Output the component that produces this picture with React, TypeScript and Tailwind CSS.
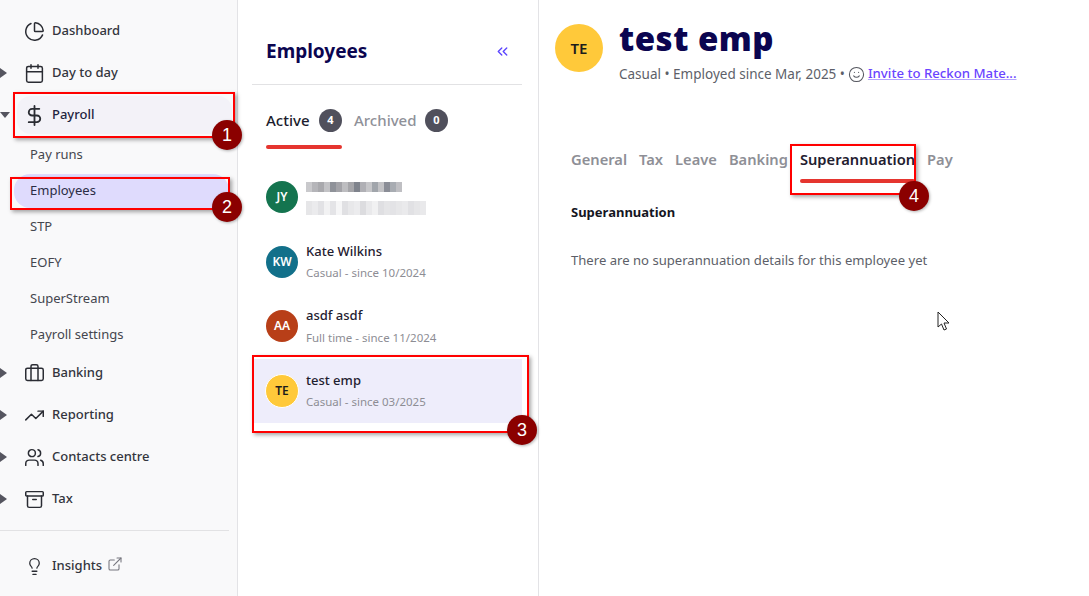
import React from "react";
import { Archive, Briefcase, Calendar, ChevronsLeft, DollarSign, ExternalLink, Lightbulb, PieChart, Smile, TrendingUp, Users } from "lucide-react";

const font = { fontFamily: '"Noto Sans", "Open Sans", sans-serif' };

function Caret({ open }: { open?: boolean }) {
  return open ? (
    <div className="absolute left-0 top-1/2 -mt-[3px] w-0 h-0 border-l-[5px] border-r-[5px] border-t-[6px] border-l-transparent border-r-transparent border-t-[#55555f]" />
  ) : (
    <div className="absolute left-0 top-1/2 -mt-[5px] w-0 h-0 border-t-[5px] border-b-[5px] border-l-[7px] border-t-transparent border-b-transparent border-l-[#55555f]" />
  );
}

function NavRow({ icon, label, caret, open, active }: { icon: React.ReactNode; label: string; caret?: boolean; open?: boolean; active?: boolean }) {
  return (
    <div className="relative h-[42px] flex items-center">
      {caret && <Caret open={open} />}
      <div className={`ml-[17px] mr-[5px] flex-1 h-[38px] flex items-center rounded-[14px] ${active ? "bg-[#f3f2f8]" : ""}`}>
        <div className="w-[35px] flex justify-center text-[#2a2c33]">{icon}</div>
        <span className={`text-[13px] font-medium ${active ? "text-[#1f2440]" : "text-[#33353d]"}`}>{label}</span>
      </div>
    </div>
  );
}

function SubRow({ label, active }: { label: string; active?: boolean }) {
  return (
    <div className="h-[36px] flex items-center">
      <div className={`ml-[14px] mr-[8px] flex-1 h-[34px] flex items-center pl-[16px] rounded-[16px] text-[13px] ${active ? "bg-[#dfdbfd] text-[#2b2c45]" : "text-[#44464e]"}`}>{label}</div>
    </div>
  );
}

function Sidebar() {
  const ic = { size: 21, strokeWidth: 1.7 };
  return (
    <aside className="w-[238px] shrink-0 bg-[#f9f9fa] border-r border-[#e3e3e6] pt-[10px] flex flex-col">
      <NavRow icon={<PieChart {...ic} />} label="Dashboard" />
      <NavRow icon={<Calendar {...ic} />} label="Day to day" caret />
      <NavRow icon={<DollarSign size={23} strokeWidth={1.9} />} label="Payroll" caret open active />
      <div className="mt-[1px] -mb-[1px]">
        <SubRow label="Pay runs" />
        <SubRow label="Employees" active />
        <SubRow label="STP" />
        <SubRow label="EOFY" />
        <SubRow label="SuperStream" />
        <SubRow label="Payroll settings" />
      </div>
      <NavRow icon={<Briefcase {...ic} />} label="Banking" caret />
      <NavRow icon={<TrendingUp {...ic} />} label="Reporting" caret />
      <NavRow icon={<Users {...ic} />} label="Contacts centre" caret />
      <NavRow icon={<Archive {...ic} />} label="Tax" caret />
      <div className="mt-[10px] h-px mr-[8px] bg-[#e2e2e4]" />
      <div className="mt-[14px] h-[42px] flex items-center pl-[17px]">
        <div className="w-[35px] flex justify-center text-[#2a2c33]"><Lightbulb size={19} strokeWidth={1.6} /></div>
        <span className="text-[13px] font-medium text-[#33353d]">Insights</span>
        <ExternalLink size={16} strokeWidth={1.6} className="ml-[5px] -mt-[4px] text-[#77777f]" />
      </div>
    </aside>
  );
}

const mosaicTop = ["#c9c9cc","#b5b5b9","#a9a9ad","#c3c3c6","#8f9299","#a3a3a8","#bdbdc0","#a5a5a9","#7f838c","#b0b0b5","#c6c6c9","#a1a5ab","#c2c2c5","#8a8d96","#a8acb2","#bfbfc3"];
const mosaicBottom = ["#e6e6e8","#ebebed","#e2e2e5","#f2f2f3","#e4e4e7","#f6f6f7","#e0e0e3","#e8e8ea","#ececee","#dcdcdf","#e9e9eb","#f1f1f2","#dfdfe2","#e5e5e7","#e3e3e6","#e7e7e9","#eaeaec","#e1e1e4","#e6e6e8","#e9e9eb"];

function Mosaic({ colors, cell }: { colors: string[]; cell: number }) {
  return (
    <div className="flex">
      {colors.map((c, i) => (
        <div key={i} style={{ background: c, width: 6, height: cell }} />
      ))}
    </div>
  );
}

function EmpRow({ initials, bg, fg, name, sub, selected, blurred }: { initials: string; bg: string; fg: string; name?: string; sub?: string; selected?: boolean; blurred?: boolean }) {
  return (
    <div className={`h-[64.5px] ml-[14px] mr-[16px] pl-[14px] flex items-center gap-[8px] ${selected ? "bg-[#eeedfb]" : ""}`}>
      <div className={`rounded-full flex items-center justify-center text-[12px] font-semibold ${bg} ${fg} ${selected ? "w-[34px] h-[34px] -ml-[1px] -mr-[1px] border border-white" : "w-[32px] h-[32px]"}`}>{initials}</div>
      <div className="flex flex-col mt-[1px]">
        {blurred ? (
          <>
            <div className="h-[21px] flex items-center"><Mosaic colors={mosaicTop} cell={10} /></div>
            <div className="h-[22px] flex items-center"><Mosaic colors={mosaicBottom} cell={14} /></div>
          </>
        ) : (
          <>
            <div className="h-[21px] flex items-center text-[13px] font-medium text-[#1f2030]">{name}</div>
            <div className="h-[22px] flex items-center text-[11.5px] text-[#8d8d94]">{sub}</div>
          </>
        )}
      </div>
    </div>
  );
}

function ListPane() {
  return (
    <section className="w-[301px] shrink-0 border-r border-[#e3e3e6] flex flex-col">
      <div className="h-[85px] ml-[14px] mr-[16px] border-b border-[#e2e2e4] flex items-center justify-between pl-[14px] pr-[11px] pt-[19px]">
        <span className="text-[19px] font-bold text-[#0b0550]">Employees</span>
        <ChevronsLeft size={17} strokeWidth={1.9} className="text-[#5b45ff]" />
      </div>
      <div className="h-[64px] flex items-start pl-[28px] relative pt-[23px]">
        <div className="flex items-center h-[24px] w-[76px]">
          <span className="text-[15px] font-medium text-[#1c1d2e] w-[53px]">Active</span>
          <span className="w-[23px] h-[23px] rounded-full bg-[#50505c] text-white text-[11px] font-bold flex items-center justify-center">4</span>
        </div>
        <div className="flex items-center h-[24px] ml-[12px]">
          <span className="text-[15px] font-medium text-[#8f9199] w-[71px]">Archived</span>
          <span className="w-[23px] h-[23px] rounded-full bg-[#50505c] text-white text-[11px] font-bold flex items-center justify-center">0</span>
        </div>
      </div>
      <div className="ml-[28px] -mt-[4px] w-[76px] h-[4px] rounded-full bg-[#e5352f]" />
      <div className="mt-[16px]">
        <EmpRow initials="JY" bg="bg-[#14744f]" fg="text-white" blurred />
        <EmpRow initials="KW" bg="bg-[#12708a]" fg="text-white" name="Kate Wilkins" sub="Casual - since 10/2024" />
        <EmpRow initials="AA" bg="bg-[#b83f18]" fg="text-white" name="asdf asdf" sub="Full time - since 11/2024" />
        <EmpRow initials="TE" bg="bg-[#ffc93a]" fg="text-[#1c1c1c]" name="test emp" sub="Casual - since 03/2025" selected />
      </div>
    </section>
  );
}

function DetailPane() {
  const tabs = ["General", "Tax", "Leave", "Banking"];
  return (
    <section className="flex-1 flex flex-col pl-[16px]">
      <div className="flex pt-[14px] h-[129px]">
        <div className="mt-[10px] w-[48px] h-[48px] rounded-full bg-[#ffc93a] flex items-center justify-center text-[15px] font-semibold text-[#1c1c1c]">TE</div>
        <div className="ml-[16px]">
          <div className="text-[33px] leading-[50px] font-black text-[#0b0550] tracking-[0.5px]">test emp</div>
          <div className="flex items-center h-[18px] text-[13.5px] text-[#5d5f69] mt-[1px]">
            <span>Casual • Employed since Mar, 2025 •</span>
            <Smile size={17} strokeWidth={1.5} className="mx-[3px] text-[#55575f]" />
            <span className="text-[#6a45ff] text-[13.2px] font-medium underline decoration-[#b3a4ff]">Invite to Reckon Mate...</span>
          </div>
        </div>
      </div>
      <div className="pl-[16px] flex items-start h-[57px] text-[14.7px] font-semibold text-[#8e8f96] gap-[12px]">
        {tabs.map((t) => <span key={t} className="leading-[20px] pt-[20px]">{t}</span>)}
        <div className="pt-[20px] flex flex-col">
          <span className="leading-[20px] text-[#1f2030]">Superannuation</span>
          <div className="h-[4px] rounded-full bg-[#e5352f] mt-[10px]" />
        </div>
        <span className="leading-[20px] pt-[20px]">Pay</span>
      </div>
      <div className="pl-[16px] mt-[17px] text-[13px] font-bold text-[#15161f] leading-[18px]">Superannuation</div>
      <div className="pl-[16px] mt-[30px] text-[13.1px] text-[#5d5f69] leading-[18px]">There are no superannuation details for this employee yet</div>
    </section>
  );
}

function Note({ n, box, dot }: { n: number; box: string; dot: string }) {
  return (
    <>
      <div className={`absolute border-2 border-[#ff0000] shadow-[2px_2px_4px_rgba(0,0,0,0.35)] ${box}`} />
      <div className={`absolute w-[30px] h-[30px] rounded-full bg-[#8b0000] text-white text-[18px] flex items-center justify-center shadow-[1px_1px_3px_rgba(0,0,0,0.3)] ${dot}`} style={{ fontFamily: '"Liberation Sans", sans-serif' }}>{n}</div>
    </>
  );
}

export default function App() {
  return (
    <div className="relative w-[1089px] h-[596px] overflow-hidden bg-white flex" style={font}>
      <Sidebar />
      <ListPane />
      <DetailPane />
      <Note n={1} box="left-[13px] top-[92px] w-[222px] h-[46px]" dot="left-[212px] top-[120px]" />
      <Note n={2} box="left-[10px] top-[177px] w-[220px] h-[33px]" dot="left-[212px] top-[192px]" />
      <Note n={3} box="left-[252px] top-[355px] w-[277px] h-[78px]" dot="left-[507px] top-[415px]" />
      <Note n={4} box="left-[790px] top-[144px] w-[126px] h-[51px]" dot="left-[899px] top-[181px]" />
      <svg className="absolute left-[937px] top-[311px]" width="14" height="21" viewBox="0 0 14 21">
        <path d="M1 1 L1 16 L4.5 13 L7 19 L9.5 18 L7 12 L12 12 Z" fill="#fff" stroke="#222" strokeWidth="1" />
      </svg>
    </div>
  );
}
